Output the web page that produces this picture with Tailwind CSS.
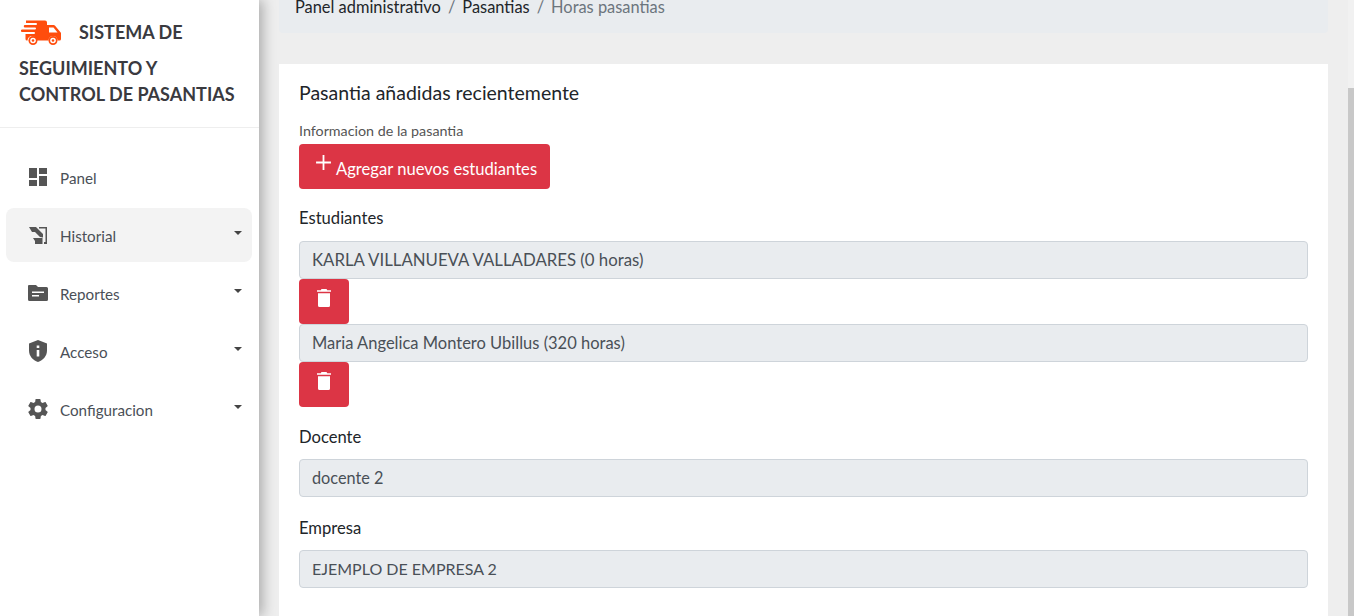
<!DOCTYPE html>
<html lang="es">
<head>
    <meta charset="utf-8">
    <title>Horas pasantias</title>
    <script src="https://cdn.jsdelivr.net/npm/@tailwindcss/browser@4"></script>
</head>
<body class="h-[616px] overflow-hidden bg-[#eeeeee] font-['Lato',sans-serif] text-[#212529]">
    <div class="flex h-[616px]">

        <!-- sidebar -->
        <aside class="relative z-10 w-[259px] shrink-0 bg-white shadow-[4px_0_12px_rgba(0,0,0,0.28)]">
            <div class="h-[128px] border-b border-[#eeeeee] pl-[19px] pt-[19px] text-[18px] font-bold leading-[26px] text-[#3a3a3f]">
                <div class="flex h-[26px] items-center">
                    <svg class="ml-[2px] h-[26px] w-[41px]" viewBox="0 0 41 26" fill="#ff4d0d">
                        <path d="M5 1.500h19a2 2 0 0 1 2 2V6h6.500a2 2 0 0 1 1.600.8l5.400 6.400a2 2 0 0 1 .5 1.300V20a1.500 1.500 0 0 1-1.500 1.500h-2a4.500 4.500 0 0 0-9 0h-12a4.500 4.500 0 0 0-9 0H6a1.500 1.500 0 0 1-1.500-1.500v-5H13a1 1 0 0 0 0-2H1a1 1 0 0 1 0-2.500h13a1 1 0 0 0 0-2H4a1 1 0 0 1 0-2.500h11a1 1 0 0 0 0-2H5z"/>
                        <path fill="#fff" d="M28 8.500h4.500l4 5H28z"/>
                        <circle cx="12" cy="21.500" r="4.500"/>
                        <circle cx="12" cy="21.500" r="2.800" fill="#fff"/>
                        <circle cx="12" cy="21.500" r="1.300"/>
                        <circle cx="32" cy="21.500" r="4.500"/>
                        <circle cx="32" cy="21.500" r="2.800" fill="#fff"/>
                        <circle cx="32" cy="21.500" r="1.300"/>
                    </svg>
                    <span class="ml-[17px]">SISTEMA DE</span>
                </div>
                <div class="mt-[10px]">SEGUIMIENTO Y</div>
                <div>CONTROL DE PASANTIAS</div>
            </div>

            <nav class="pl-[6px] pr-[7px] pt-[22px] text-[15.200px] text-[#4a4f57]">
                <a class="mb-[4px] flex h-[54px] items-center rounded-lg pl-[20px]">
                    <svg class="h-[24px] w-[24px] fill-[#555555]" viewBox="0 0 24 24"><path d="M13 3v6h8V3M13 21h8V11h-8M3 21h8v-6H3M3 13h8V3H3z"/></svg>
                    <span class="ml-[10px] mt-[2px]">Panel</span>
                </a>
                <a class="relative mb-[4px] flex h-[54px] items-center rounded-lg bg-[#f3f3f3] pl-[20px]">
                    <svg class="h-[24px] w-[24px] fill-[#555555]" viewBox="0 0 24 24"><path d="M13 4h8v17h-3v-2h1.500V5.500H13zM3 4h7l7 7v3.500l-3-.5-5-5H6zM7 15h9.500v6H9v-3z"/></svg>
                    <span class="ml-[10px] mt-[2px]">Historial</span>
                    <span class="absolute right-[10px] top-[23px] border-x-[4px] border-t-[4px] border-x-transparent border-t-[#444444]"></span>
                </a>
                <a class="relative mb-[4px] flex h-[54px] items-center rounded-lg pl-[20px]">
                    <svg class="h-[24px] w-[24px] fill-[#555555]" viewBox="0 0 24 24"><path d="M3 4h7l2 2h8.500A1.500 1.500 0 0 1 22 7.500v11a1.500 1.500 0 0 1-1.500 1.500h-17A1.500 1.500 0 0 1 2 18.500V5a1 1 0 0 1 1-1zM6 10.500V12h12v-1.500zM6 14v1.500h7V14z" fill-rule="evenodd"/></svg>
                    <span class="ml-[10px] mt-[2px]">Reportes</span>
                    <span class="absolute right-[10px] top-[23px] border-x-[4px] border-t-[4px] border-x-transparent border-t-[#444444]"></span>
                </a>
                <a class="relative mb-[4px] flex h-[54px] items-center rounded-lg pl-[20px]">
                    <svg class="h-[24px] w-[24px] fill-[#555555]" viewBox="0 0 24 24"><path fill-rule="evenodd" d="M12 1l9 3.500v7c0 5.500-3.800 9.800-9 11.500-5.200-1.700-9-6-9-11.500v-7zM10.700 6.500v2.600h2.600V6.500zM10.700 11v6.500h2.600V11z"/></svg>
                    <span class="ml-[10px] mt-[2px]">Acceso</span>
                    <span class="absolute right-[10px] top-[23px] border-x-[4px] border-t-[4px] border-x-transparent border-t-[#444444]"></span>
                </a>
                <a class="relative flex h-[54px] items-center rounded-lg pl-[20px]">
                    <svg class="h-[24px] w-[24px] fill-[#555555]" viewBox="0 0 24 24"><path d="M12 15.500A3.500 3.500 0 1 1 12 8.500a3.500 3.500 0 0 1 0 7zm7.430-2.530c.04-.32.07-.64.07-.97s-.03-.66-.07-1l2.110-1.630c.19-.15.24-.42.12-.64l-2-3.460c-.12-.22-.39-.31-.61-.22l-2.490 1c-.52-.39-1.060-.73-1.690-.98l-.37-2.650A.506.506 0 0 0 14 2h-4c-.25 0-.46.18-.5.42l-.37 2.650c-.63.25-1.170.59-1.690.98l-2.490-1c-.22-.09-.49 0-.61.22l-2 3.460c-.13.22-.07.49.12.64L4.570 11c-.04.34-.07.67-.07 1s.03.65.07.97l-2.110 1.660c-.19.15-.25.42-.12.64l2 3.460c.12.22.39.3.61.22l2.490-1.010c.52.4 1.060.74 1.690.99l.37 2.650c.04.24.25.42.5.42h4c.25 0 .46-.18.5-.42l.37-2.650c.63-.26 1.170-.59 1.690-.99l2.490 1.010c.22.08.49 0 .61-.22l2-3.460c.12-.22.07-.49-.12-.64z"/></svg>
                    <span class="ml-[10px] mt-[2px]">Configuracion</span>
                    <span class="absolute right-[10px] top-[23px] border-x-[4px] border-t-[4px] border-x-transparent border-t-[#444444]"></span>
                </a>
            </nav>
        </aside>

        <!-- content, already scrolled down a bit -->
        <main class="-mt-[15px] min-w-0 flex-1 px-5">
            <div class="flex h-[48px] items-center gap-[7px] rounded-b bg-[#e9ecef] pb-[4px] pl-[16px] text-[16.400px]">
                <span>Panel administrativo</span>
                <span class="text-[#6c757d]">/</span>
                <span>Pasantias</span>
                <span class="text-[#6c757d]">/</span>
                <span class="text-[#6c757d]">Horas pasantias</span>
            </div>

            <section class="mt-[31px] h-[560px] bg-white p-5">
                <h4 class="text-[19.500px] leading-[17px]">Pasantia añadidas recientemente</h4>
                <p class="mt-[20px] text-[14.300px] leading-[20px] text-[#555555]">Informacion de la pasantia</p>
                <button class="mt-[3px] flex h-[45px] w-[251px] items-center rounded bg-[#dc3545] pl-[16px] text-[16.600px] text-white">
                    <svg class="mb-[9px] h-[17px] w-[17px] stroke-white" viewBox="0 0 16 16" fill="none" stroke-width="1.700"><path d="M8 1v14M1 8h14"/></svg>
                    <span class="ml-[4px] mt-[6px]">Agregar nuevos estudiantes</span>
                </button>

                <label class="mt-[18px] block text-[16.600px] leading-[22px]">Estudiantes</label>
                <div class="mt-[12px] flex h-[38px] items-center rounded border border-[#ced4da] bg-[#e9ecef] px-[12px] text-[16.800px] text-[#495057]">KARLA VILLANUEVA VALLADARES (0 horas)</div>
                <button class="flex h-[45px] w-[50px] justify-center rounded bg-[#dc3545] pt-[10px]">
                    <svg class="h-[18px] w-[14px] fill-white" viewBox="0 0 14 18"><path d="M4.500 0h5l.8 1.200H14v1.600H0V1.200h3.700zM1 4.200h12V16.500a1.500 1.500 0 0 1-1.500 1.500h-9A1.500 1.500 0 0 1 1 16.500z"/></svg>
                </button>
                <div class="flex h-[38px] items-center rounded border border-[#ced4da] bg-[#e9ecef] px-[12px] text-[16.500px] text-[#495057]">Maria Angelica Montero Ubillus (320 horas)</div>
                <button class="flex h-[45px] w-[50px] justify-center rounded bg-[#dc3545] pt-[10px]">
                    <svg class="h-[18px] w-[14px] fill-white" viewBox="0 0 14 18"><path d="M4.500 0h5l.8 1.200H14v1.600H0V1.200h3.700zM1 4.200h12V16.500a1.500 1.500 0 0 1-1.500 1.500h-9A1.500 1.500 0 0 1 1 16.500z"/></svg>
                </button>

                <label class="mt-[19px] block text-[16.600px] leading-[22px]">Docente</label>
                <div class="mt-[11px] flex h-[38px] items-center rounded border border-[#ced4da] bg-[#e9ecef] px-[12px] text-[16.300px] text-[#495057]">docente 2</div>

                <label class="mt-[20px] block text-[16.600px] leading-[22px]">Empresa</label>
                <div class="mt-[11px] flex h-[38px] items-center rounded border border-[#ced4da] bg-[#e9ecef] px-[12px] text-[16px] text-[#495057]">EJEMPLO DE EMPRESA 2</div>
            </section>
        </main>

        <!-- scrollbar -->
        <div class="w-[6px] shrink-0 bg-[#f1f1f1]">
            <div class="mt-[88px] h-[528px] bg-[#c8c8c8]"></div>
        </div>
    </div>
</body>
</html>
